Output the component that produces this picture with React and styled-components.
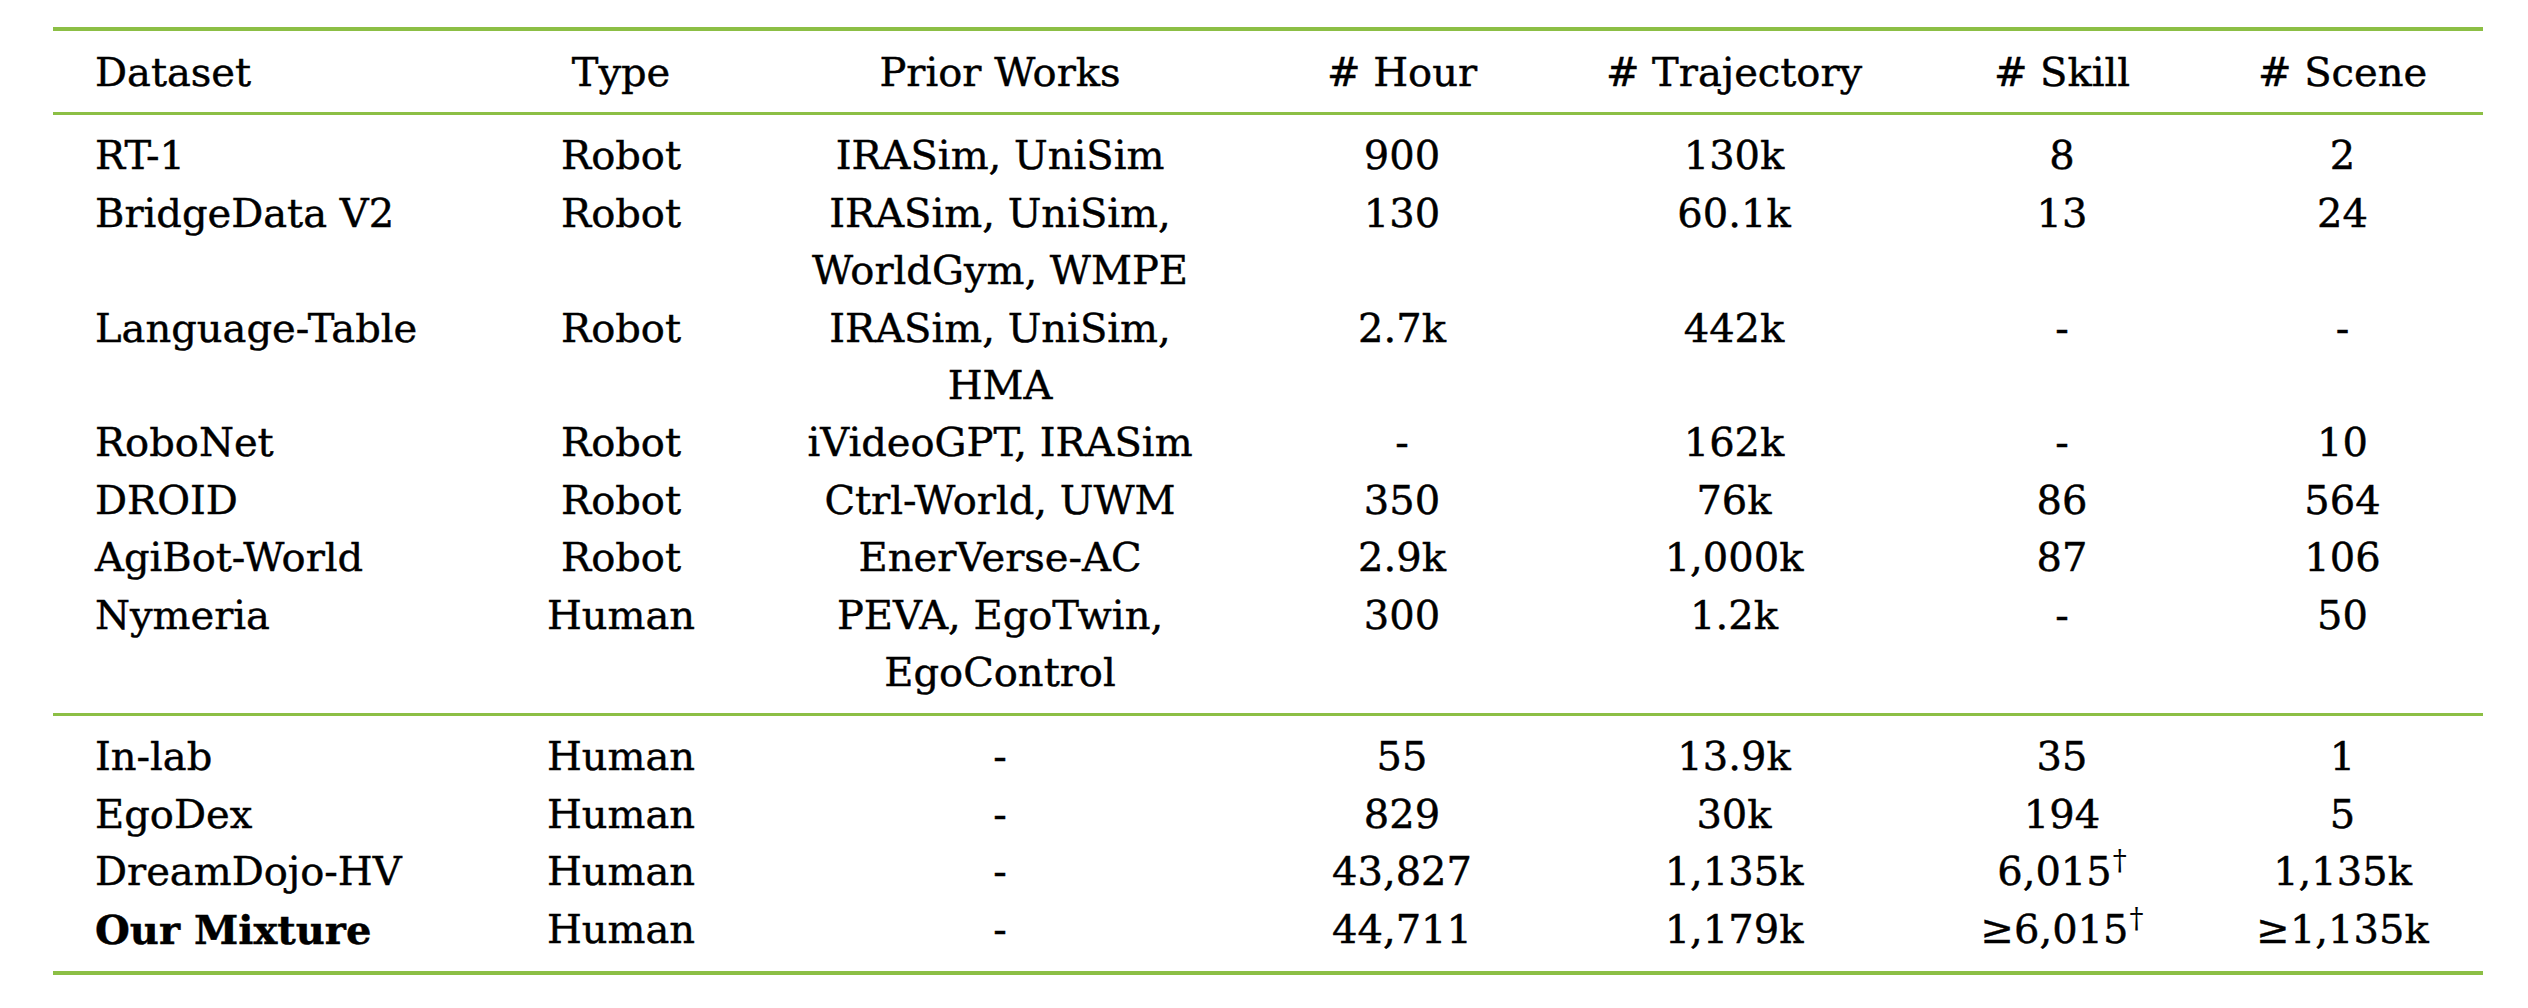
import React from 'react';
import styled, { createGlobalStyle } from 'styled-components';

const GREEN = '#8cbf45';
const LINE = 57.4;

const GlobalStyle = createGlobalStyle`
	html, body {
		margin: 0;
		padding: 0;
		background: #ffffff;
	}
	body {
		font-family: 'DejaVu Serif', 'Liberation Serif', serif;
		color: #000000;
	}
`;

const Page = styled.div`
	width: 2528px;
	height: 1008px;
	padding: 27px 0 0 53px;
	box-sizing: border-box;
	overflow: hidden;
`;

const Table = styled.table`
	width: 2430px;
	table-layout: fixed;
	border-collapse: collapse;
	border-spacing: 0;
	font-size: 40px;
	line-height: ${LINE}px;
	-webkit-text-stroke: 0.45px #000;
`;

const Col = styled.col`
	width: ${(p) => p.$w}px;
`;

const RuleCell = styled.td`
	padding: 0;
	height: ${(p) => p.$weight}px;
	background: ${GREEN};
	line-height: 0;
	font-size: 0;
`;

const Cell = styled.td`
	padding: ${(p) => (p.$first ? p.$padTop : 0)}px 0 ${(p) => (p.$last ? p.$padBottom : 0)}px
		${(p) => (p.$align === 'left' ? 42 : 0)}px;
	text-align: ${(p) => p.$align || 'center'};
	vertical-align: top;
	white-space: nowrap;
	font-weight: ${(p) => (p.$bold ? 700 : 400)};
`;

const HeadCell = styled(Cell).attrs({ as: 'th' })`
	font-weight: 400;
`;

const Sup = styled.sup`
	font-size: 28px;
	line-height: 0;
	vertical-align: 15px;
	margin-left: 1px;
	-webkit-text-stroke: 0;
`;

const columns = [447, 242, 516, 288, 376, 280, 281];
const headers = ['Dataset', 'Type', 'Prior Works', '# Hour', '# Trajectory', '# Skill', '# Scene'];

const robotRows = [
	['RT-1', 'Robot', ['IRASim, UniSim'], '900', '130k', '8', '2'],
	['BridgeData V2', 'Robot', ['IRASim, UniSim,', 'WorldGym, WMPE'], '130', '60.1k', '13', '24'],
	['Language-Table', 'Robot', ['IRASim, UniSim,', 'HMA'], '2.7k', '442k', '-', '-'],
	['RoboNet', 'Robot', ['iVideoGPT, IRASim'], '-', '162k', '-', '10'],
	['DROID', 'Robot', ['Ctrl-World, UWM'], '350', '76k', '86', '564'],
	['AgiBot-World', 'Robot', ['EnerVerse-AC'], '2.9k', '1,000k', '87', '106'],
	['Nymeria', 'Human', ['PEVA, EgoTwin,', 'EgoControl'], '300', '1.2k', '-', '50'],
];

const humanRows = [
	['In-lab', 'Human', ['-'], '55', '13.9k', '35', '1'],
	['EgoDex', 'Human', ['-'], '829', '30k', '194', '5'],
	['DreamDojo-HV', 'Human', ['-'], '43,827', '1,135k', '6,015†', '1,135k'],
	['Our Mixture', 'Human', ['-'], '44,711', '1,179k', '≥6,015†', '≥1,135k', true],
];

// splits a trailing dagger off so it can be set as a superscript
const renderValue = (v) => {
	if (typeof v === 'string' && v.endsWith('†')) {
		return (
			<>
				{v.slice(0, -1)}
				<Sup>†</Sup>
			</>
		);
	}
	return v;
};

const Rule = ({ weight }) => (
	<tr>
		<RuleCell colSpan={7} $weight={weight} />
	</tr>
);

const Section = ({ rows, padTop, padBottom }) =>
	rows.map((row, i) => {
		const [name, type, works, ...nums] = row;
		const bold = row[7] === true;
		const edge = { $first: i === 0, $last: i === rows.length - 1, $padTop: padTop, $padBottom: padBottom };
		return (
			<tr key={name}>
				<Cell $align='left' $bold={bold} {...edge}>
					{name}
				</Cell>
				<Cell {...edge}>{type}</Cell>
				<Cell {...edge}>
					{works.map((w, j) => (
						<div key={j}>{w}</div>
					))}
				</Cell>
				{nums.slice(0, 4).map((n, j) => (
					<Cell key={j} {...edge}>
						{renderValue(n)}
					</Cell>
				))}
			</tr>
		);
	});

const App = () => (
	<Page>
		<GlobalStyle />
		<Table>
			<colgroup>
				{columns.map((w, i) => (
					<Col key={i} $w={w} />
				))}
			</colgroup>
			<tbody>
				<Rule weight={4} />
				<tr>
					{headers.map((h, i) => (
						<HeadCell key={h} $align={i === 0 ? 'left' : 'center'} $first $last $padTop={13} $padBottom={11}>
							{h}
						</HeadCell>
					))}
				</tr>
				<Rule weight={3} />
				<Section rows={robotRows} padTop={12} padBottom={12} />
				<Rule weight={3} />
				<Section rows={humanRows} padTop={12} padBottom={13} />
				<Rule weight={4} />
			</tbody>
		</Table>
	</Page>
);

export default App;
